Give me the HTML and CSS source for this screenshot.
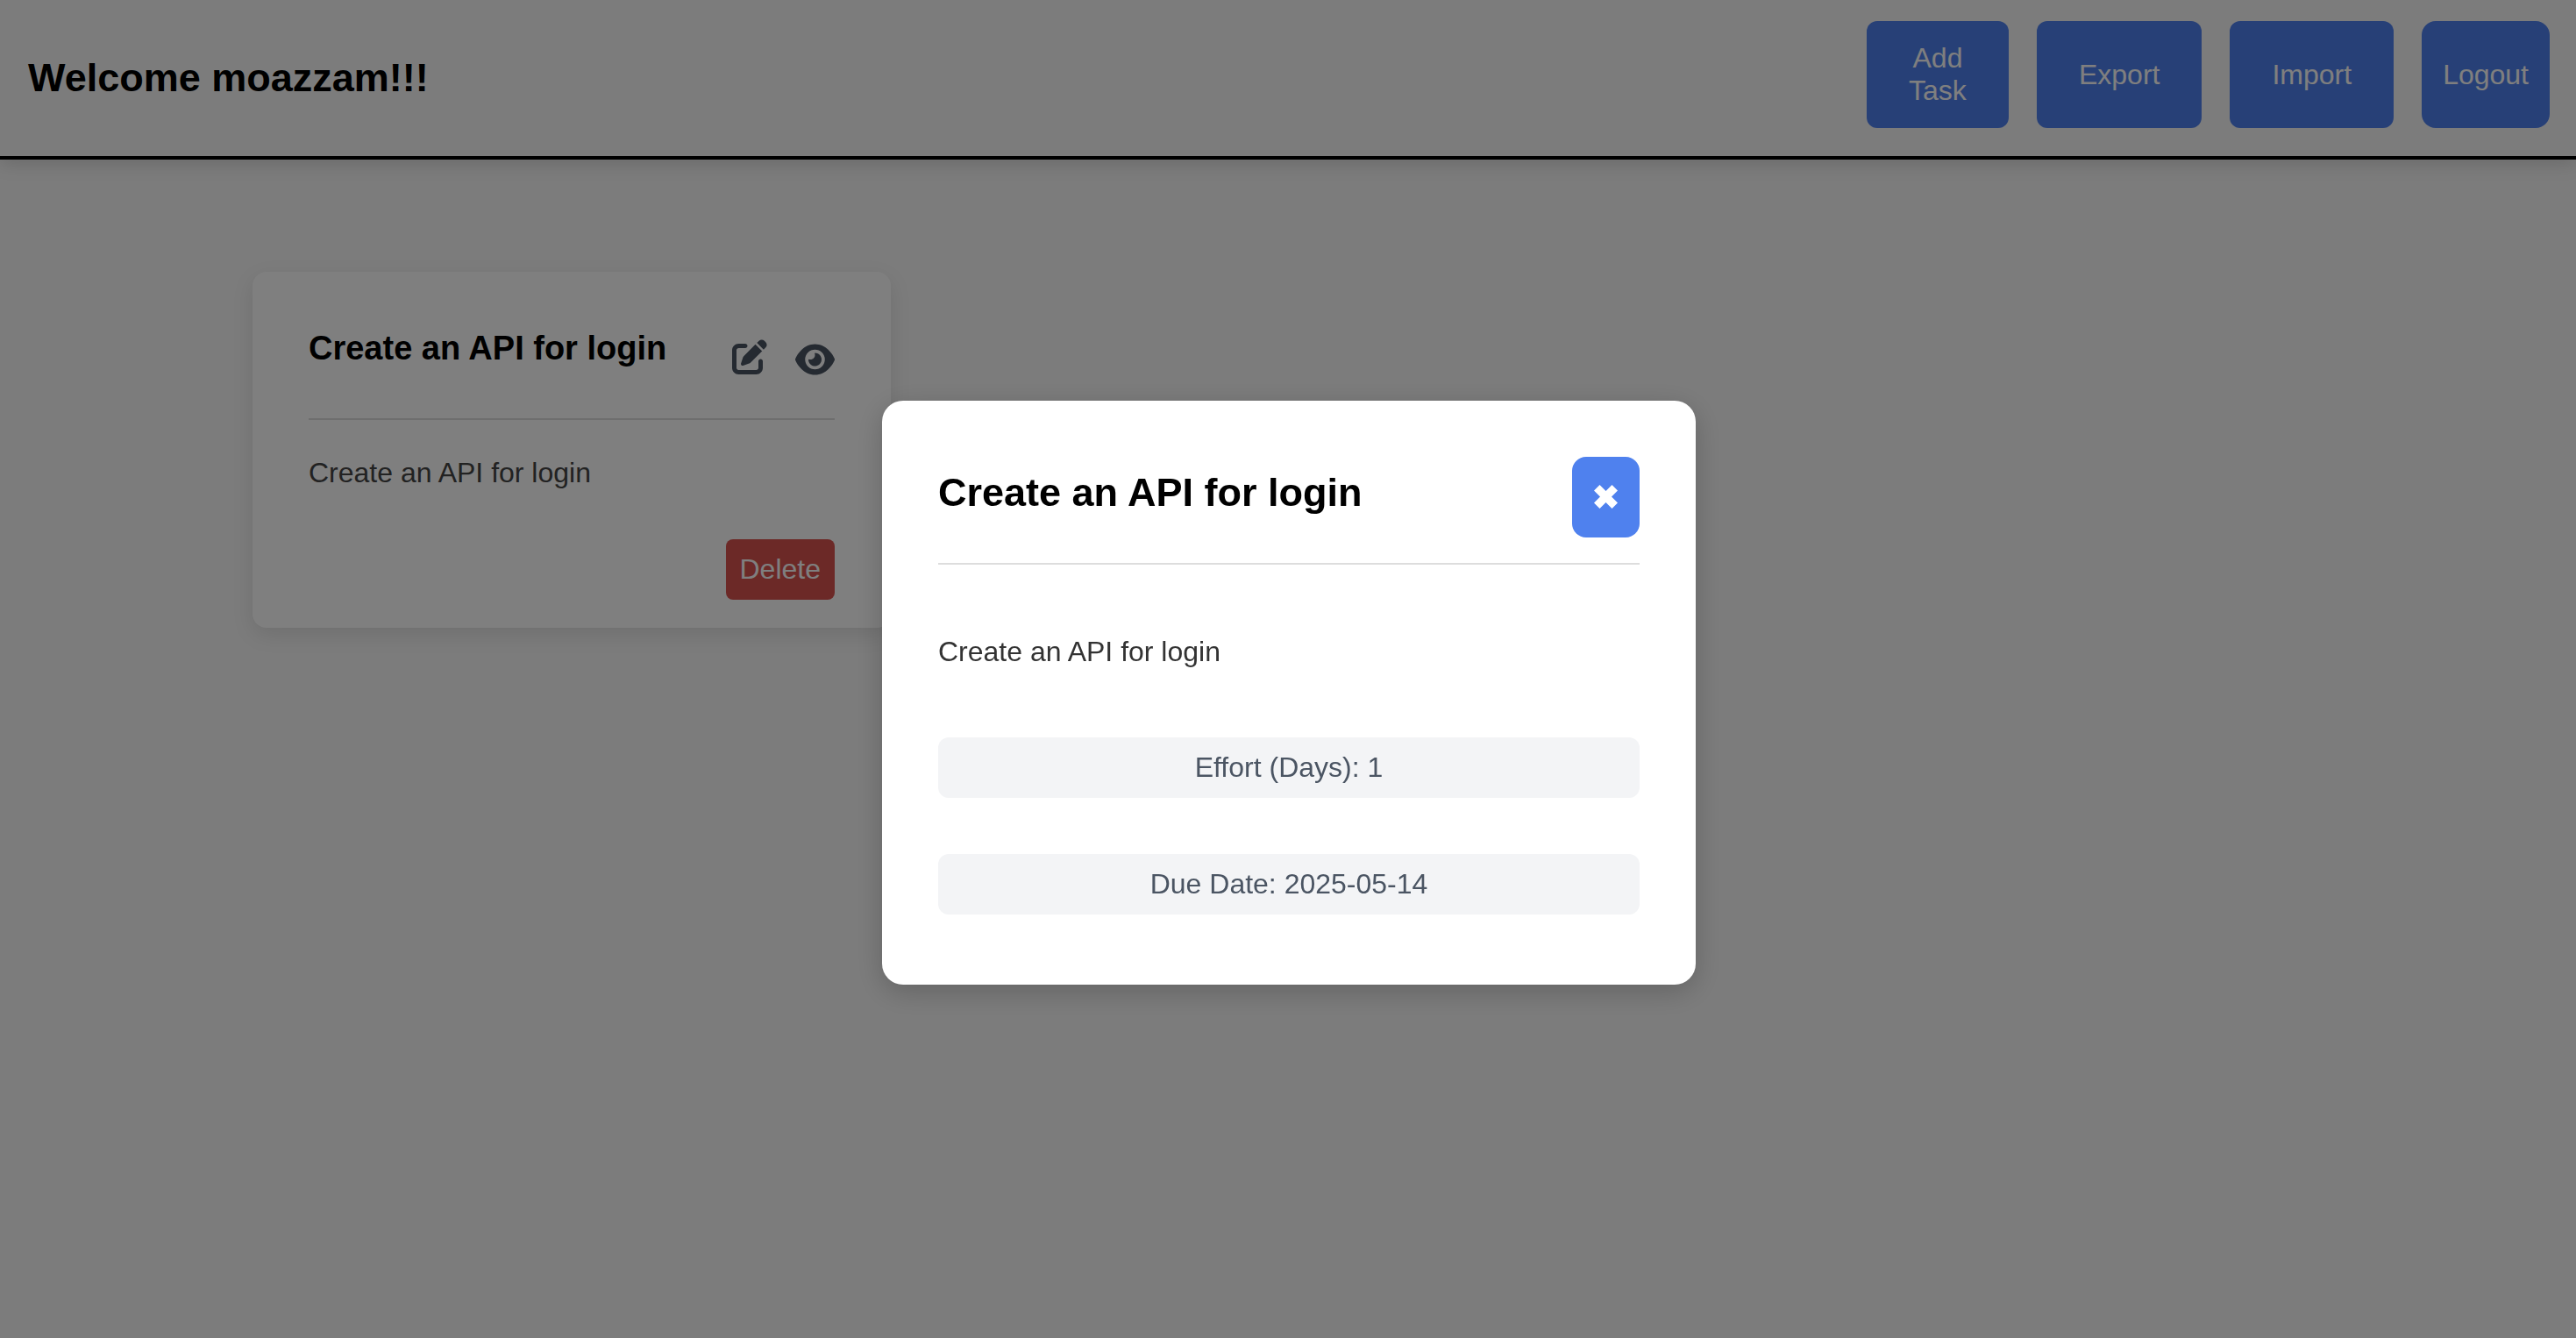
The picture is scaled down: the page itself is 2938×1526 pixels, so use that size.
FILE: index.html
```html
<!DOCTYPE html>
<html lang="en">
<head>
  <meta charset="utf-8">
  <meta name="viewport" content="width=device-width, initial-scale=1">
  <title>Tasks</title>
  <link rel="stylesheet" href="styles.css">
</head>
<body>
  <header class="topbar">
    <h1 class="heading">Welcome moazzam!!!</h1>
    <nav class="actions">
      <button type="button" class="btn btn-narrow">Add Task</button>
      <button type="button" class="btn">Export</button>
      <button type="button" class="btn">Import</button>
      <button type="button" class="btn btn-logout">Logout</button>
    </nav>
  </header>

  <main class="board">
    <article class="card">
      <div class="card-head">
        <h2 class="card-title">Create an API for login</h2>
        <div class="card-icons">
          <button type="button" class="icon-btn" aria-label="Edit task">
            <svg width="40" height="40" viewBox="0 0 512 512" aria-hidden="true"><path d="M471.6 21.7c-21.9-21.9-57.3-21.9-79.2 0L362.3 51.7l97.9 97.9 30.1-30.1c21.9-21.9 21.9-57.3 0-79.2L471.6 21.7zm-299.2 220c-6.1 6.1-10.8 13.6-13.5 21.9l-29.6 88.8c-2.9 8.6-.6 18.1 5.8 24.6s15.9 8.7 24.6 5.8l88.8-29.6c8.2-2.7 15.7-7.4 21.9-13.5L437.7 172.3 339.7 74.3 172.4 241.7zM96 64C43 64 0 107 0 160V416c0 53 43 96 96 96H352c53 0 96-43 96-96V320c0-17.7-14.3-32-32-32s-32 14.3-32 32v96c0 17.7-14.3 32-32 32H96c-17.7 0-32-14.3-32-32V160c0-17.7 14.3-32 32-32h96c17.7 0 32-14.3 32-32s-14.3-32-32-32H96z"/></svg>
          </button>
          <button type="button" class="icon-btn" aria-label="View task">
            <svg width="45" height="43" viewBox="0 -38 576 550" aria-hidden="true"><path d="M288 32c-80.8 0-145.5 36.8-192.6 80.6C48.6 156 17.3 208 2.5 243.7c-3.3 7.9-3.3 16.7 0 24.6C17.3 304 48.6 356 95.4 399.4C142.5 443.2 207.2 480 288 480s145.5-36.8 192.6-80.6c46.8-43.5 78.1-95.4 93-131.1c3.3-7.9 3.3-16.7 0-24.6c-14.9-35.7-46.2-87.7-93-131.1C433.5 68.8 368.8 32 288 32zM144 256a144 144 0 1 1 288 0 144 144 0 1 1 -288 0zm144-64c0 35.3-28.7 64-64 64c-7.1 0-13.9-1.2-20.3-3.3c-5.5-1.8-11.9 1.6-11.7 7.4c.3 6.9 1.3 13.8 3.2 20.7c13.7 51.2 66.4 81.6 117.6 67.9s81.6-66.4 67.9-117.6c-11.1-41.5-47.8-69.4-88.6-71.1c-5.8-.2-9.2 6.1-7.4 11.7c2.1 6.4 3.3 13.2 3.3 20.3z"/></svg>
          </button>
        </div>
      </div>
      <p class="card-text">Create an API for login</p>
      <button type="button" class="btn-delete">Delete</button>
    </article>
  </main>

  <div class="overlay">
    <section class="modal" role="dialog" aria-modal="true" aria-labelledby="modal-title">
      <div class="modal-head">
        <h2 class="heading modal-title" id="modal-title">Create an API for login</h2>
        <button type="button" class="btn-close" aria-label="Close">
          <svg width="27" height="27" viewBox="0 0 27 27" aria-hidden="true"><path d="M6.5 0 13.5 7 20.5 0 27 6.5 20 13.5 27 20.5 20.5 27 13.5 20 6.5 27 0 20.5 7 13.5 0 6.5z"/></svg>
        </button>
      </div>
      <p class="modal-text">Create an API for login</p>
      <p class="pill">Effort (Days): 1</p>
      <p class="pill">Due Date: 2025-05-14</p>
    </section>
  </div>
</body>
</html>
```

FILE: styles.css
```css
*,
*::before,
*::after {
  box-sizing: border-box;
}

body {
  margin: 0;
  min-height: 100vh;
  background: #f8f8f8;
  color: #000;
  font-family: "Liberation Sans", Arial, Helvetica, sans-serif;
  font-size: 32px;
  line-height: 37px;
}

h1,
h2,
p {
  margin: 0;
}

button {
  border: 0;
  font: inherit;
  cursor: pointer;
}

svg {
  display: block;
  fill: currentColor;
}

.heading {
  font-size: 45px;
  line-height: 54px;
  font-weight: 700;
}

/* Top bar */
.topbar {
  display: flex;
  align-items: center;
  justify-content: space-between;
  padding: 0 30px 0 32px;
  border-bottom: 4px solid #000;
  box-shadow: 0 4px 20px rgba(0, 0, 0, 0.15);
}

.actions {
  display: flex;
  gap: 32px;
  padding: 24px 0 32px;
}

.btn {
  padding: 24px 48px;
  border-radius: 12px;
  background: #4f81ee;
  color: #fff;
}

.btn-narrow {
  width: 162px;
}

.btn-logout {
  padding: 24px;
  border-radius: 16px;
}

/* Task board */
.board {
  display: flex;
  flex-wrap: wrap;
  gap: 64px;
  padding: 128px 288px;
}

.card {
  display: flex;
  flex-direction: column;
  width: 728px;
  padding: 64px 64px 32px;
  border-radius: 16px;
  background: #fff;
  box-shadow: 0 8px 24px rgba(0, 0, 0, 0.1);
}

.card-head {
  display: flex;
  align-items: flex-start;
  justify-content: space-between;
  padding-bottom: 47px;
  border-bottom: 2px solid #ddd;
}

.card-title {
  font-size: 38px;
  line-height: 46px;
}

.card-icons {
  display: flex;
  gap: 32px;
  padding-top: 13px;
  align-items: flex-start;
}

.icon-btn {
  padding: 0;
  background: none;
  color: #4b5563;
}

.card-text {
  margin-top: 42px;
  color: #444;
}

.btn-delete {
  align-self: flex-end;
  margin-top: 57px;
  padding: 16px;
  border-radius: 8px;
  background: #d9534f;
  color: #fff;
}

/* Task details dialog */
.overlay {
  position: fixed;
  inset: 0;
  display: flex;
  align-items: center;
  justify-content: center;
  padding: 54px 0 0 2px;
  background: rgba(0, 0, 0, 0.5);
}

.modal {
  width: 928px;
  padding: 64px 64px 80px;
  border-radius: 24px;
  background: #fff;
  box-shadow: 0 8px 32px rgba(0, 0, 0, 0.2);
}

.modal-head {
  display: flex;
  align-items: flex-start;
  justify-content: space-between;
  padding-bottom: 29px;
  border-bottom: 2px solid #ddd;
}

.modal-title {
  margin-top: 14px;
}

.btn-close {
  display: flex;
  align-items: center;
  justify-content: center;
  width: 77px;
  height: 92px;
  padding: 0 0 2px;
  border-radius: 16px;
  background: #4f81ee;
  color: #fff;
}

.modal-text {
  margin: 81px 0 79px;
  color: #333;
}

.pill {
  padding: 16px;
  border-radius: 12px;
  background: #f3f4f6;
  color: #4b5563;
  text-align: center;
}

.pill + .pill {
  margin-top: 64px;
}
```
